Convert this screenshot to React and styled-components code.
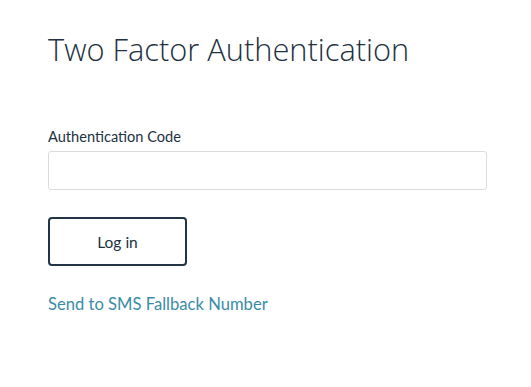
import React from "react";
import styled, { createGlobalStyle } from "styled-components";

const Global = createGlobalStyle`
  html, body { margin: 0; padding: 0; background: #ffffff; }
  body { font-family: "Lato", "Open Sans", sans-serif; color: #22313f; }
  * { box-sizing: border-box; }
`;

const Page = styled.main`
  padding: 26px 44px 0 48px;
  width: 531px;
`;

const Title = styled.h1`
  margin: 0;
  font-family: "Open Sans", sans-serif;
  font-weight: 300;
  font-size: 30.8px;
  line-height: 46px;
  color: #22313f;
  letter-spacing: 0;
`;

const Form = styled.form`
  display: flex;
  flex-direction: column;
  align-items: flex-start;
  margin-top: 56px;
`;

const Label = styled.label`
  font-size: 14.6px;
  line-height: 18px;
  color: #22313f;
  margin-bottom: 5px;
`;

const Input = styled.input`
  width: 439px;
  height: 39px;
  border: 1px solid #dcdcdc;
  border-radius: 3px;
  padding: 0 10px;
  font: inherit;
  outline: none;
`;

const Button = styled.button`
  margin-top: 27px;
  width: 139px;
  height: 49px;
  border: 2px solid #243447;
  border-radius: 4px;
  background: #fff;
  font-family: "Lato", sans-serif;
  font-size: 15.5px;
  color: #22313f;
  cursor: pointer;
`;

const Link = styled.a`
  margin-top: 28px;
  font-size: 16.6px;
  line-height: 20px;
  color: #3a8ca6;
  text-decoration: none;
`;

export default function App() {
  return (
    <>
      <Global />
      <Page>
        <Title>Two Factor Authentication</Title>
        <Form onSubmit={(e) => e.preventDefault()}>
          <Label htmlFor="code">Authentication Code</Label>
          <Input id="code" type="text" />
          <Button type="submit">Log in</Button>
          <Link href="#">Send to SMS Fallback Number</Link>
        </Form>
      </Page>
    </>
  );
}
